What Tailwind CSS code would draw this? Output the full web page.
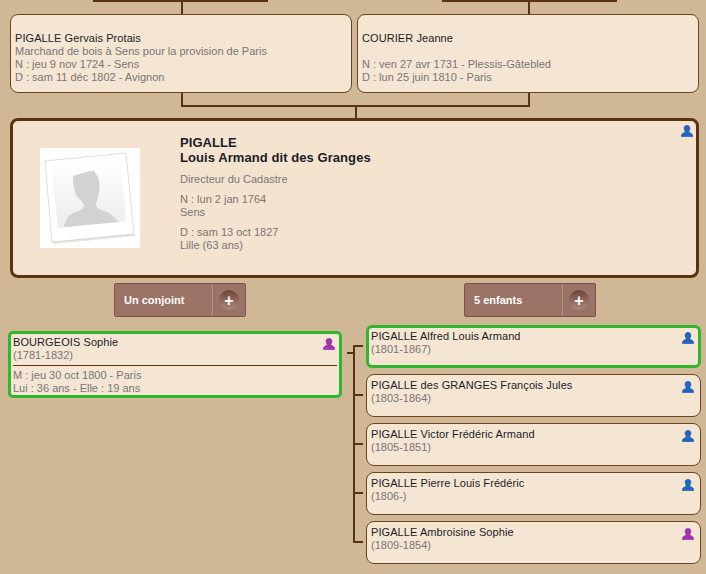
<!DOCTYPE html>
<html lang="fr">
<head>
    <meta charset="UTF-8">
    <title>PIGALLE Louis Armand</title>
    <script src="https://cdn.jsdelivr.net/npm/@tailwindcss/browser@4"></script>
</head>
<body class="w-[706px] h-[574px] overflow-hidden bg-[#d0b896] font-['Liberation_Sans',Arial,sans-serif] text-[11px] leading-[13px] text-[#7a7478]">
    <!-- Grands-parents -->
    <div class="flex pl-[10px] gap-[5px]">
        <div class="w-[342px]">
            <div class="ml-[83px] w-[175px] h-[2px] bg-[#5a3410]"></div>
            <div class="ml-[171px] w-[2px] h-[12px] bg-[#5a3410]"></div>
            <div class="h-[79px] rounded-[8px] border border-[#6b4520] bg-[#f4e6d2] px-[4px] pt-[17px]">
                <p class="text-[#1c1c28] tracking-[0.08px]">PIGALLE Gervais Protais</p>
                <p>Marchand de bois à Sens pour la provision de Paris</p>
                <p>N : jeu 9 nov 1724 - Sens</p>
                <p>D : sam 11 déc 1802 - Avignon</p>
            </div>
        </div>
        <div class="w-[342px]">
            <div class="ml-[85px] w-[175px] h-[2px] bg-[#5a3410]"></div>
            <div class="ml-[171px] w-[2px] h-[12px] bg-[#5a3410]"></div>
            <div class="h-[79px] rounded-[8px] border border-[#6b4520] bg-[#f4e6d2] px-[4px] pt-[17px]">
                <p class="text-[#1c1c28] tracking-[0.08px]">COURIER Jeanne</p>
                <p>&nbsp;</p>
                <p>N : ven 27 avr 1731 - Plessis-Gâtebled</p>
                <p>D : lun 25 juin 1810 - Paris</p>
            </div>
        </div>
    </div>

    <!-- Liaison parents -->
    <div class="ml-[181px] w-[349px] h-[14px] border-x-2 border-b-2 border-[#5a3410]"></div>
    <div class="ml-[355px] w-[2px] h-[11px] bg-[#5a3410]"></div>

    <!-- Fiche principale -->
    <div class="relative ml-[10px] w-[689px] h-[160px] rounded-[8px] border-[3px] border-[#5a3410] bg-[#f4e4cf] flex">
        <div class="ml-[27px] mt-[27px] w-[100px] h-[100px] bg-white shrink-0">
            <svg width="100" height="100" viewBox="0 0 100 100">
                <defs>
                    <linearGradient id="fond" x1="0" y1="0" x2="0" y2="1">
                        <stop offset="0" stop-color="#ffffff"/>
                        <stop offset="1" stop-color="#ececec"/>
                    </linearGradient>
                </defs>
                <polygon points="13,96 95,88 93,84 12,91" fill="#e8e4e0"/>
                <polygon points="5,13 86,5 94,86 12,94" fill="#ffffff" stroke="#bcbcbc" stroke-width="0.5"/>
                <polygon points="11,18 81,12 86,73 18,80" fill="url(#fond)"/>
                <path d="M33 28 C38 26 44 25 50 23 C50 24 53 24 53 22 C57 26 60 32 59.5 40 C59 50 56 53 56 57 C56 61 63 62 69 65 C73 68 77 73 79 74 L24 79 C25 72 28 68 33 65 C38 63 43 62 44 58 C44 54 39 52 36 47 C34 42 33 35 33 28 Z" fill="#d2d2d2"/>
            </svg>
        </div>
        <div class="ml-[40px] mt-[14px]">
            <h1 class="text-[13px] leading-[15px] font-bold text-[#1c1c28] tracking-[0.07px]">PIGALLE<br>Louis Armand dit des Granges</h1>
            <p class="mt-[8px]">Directeur du Cadastre</p>
            <p class="mt-[7px]">N : lun 2 jan 1764<br>Sens</p>
            <p class="mt-[7px]">D : sam 13 oct 1827<br>Lille (63 ans)</p>
        </div>
        <svg class="absolute top-[4px] right-[3px]" width="12" height="12" viewBox="0 0 12 12">
            <path d="M6 .4C4 .4 3.1 1.7 3.1 3.3 3.1 4.8 4 5.9 4.2 6.7 4.2 7.6 1.4 8 .7 9.5L.4 11.6H11.6L11.3 9.5C10.6 8 7.8 7.6 7.8 6.7 8 5.9 8.9 4.8 8.9 3.3 8.9 1.7 8 .4 6 .4Z" fill="#1f66c8" stroke="#144a96" stroke-width=".6"/>
        </svg>
    </div>

    <!-- Boutons -->
    <div class="flex mt-[5px] ml-[114px] gap-[218px]">
        <div class="flex w-[132px] h-[34px] rounded-[2px] border border-[#7d5246] bg-[#9a7266] text-white font-bold text-[11px]">
            <span class="flex-1 flex items-center pl-[9px] border-r border-[#b59186]">Un conjoint</span>
            <span class="w-[32px] flex items-center justify-center">
                <span class="w-[20px] h-[20px] rounded-full bg-gradient-to-b from-[#6f443a] to-[#ab897f] flex items-center justify-center text-[16px]">+</span>
            </span>
        </div>
        <div class="flex w-[132px] h-[34px] rounded-[2px] border border-[#7d5246] bg-[#9a7266] text-white font-bold text-[11px]">
            <span class="flex-1 flex items-center pl-[9px] border-r border-[#b59186]">5 enfants</span>
            <span class="w-[32px] flex items-center justify-center">
                <span class="w-[20px] h-[20px] rounded-full bg-gradient-to-b from-[#6f443a] to-[#ab897f] flex items-center justify-center text-[16px]">+</span>
            </span>
        </div>
    </div>

    <!-- Conjoint et enfants -->
    <div class="flex items-start mt-[8px] ml-[8px]">
        <div class="relative mt-[6px] w-[334px] h-[67px] rounded-[5px] border-[3px] border-[#2fb82f] bg-[#f4e6d2] px-[2px] pt-[2px]">
            <p class="text-[#1c1c28] tracking-[0.08px]">BOURGEOIS Sophie</p>
            <p>(1781-1832)</p>
            <div class="h-px bg-[#5a3410] mt-[3px] mb-[3px]"></div>
            <p>M : jeu 30 oct 1800 - Paris</p>
            <p>Lui : 36 ans - Elle : 19 ans</p>
            <svg class="absolute top-[4px] right-[4px]" width="12" height="12" viewBox="0 0 12 12">
                <path d="M6 .4C4 .4 3.1 1.7 3.1 3.3 3.1 4.8 4 5.9 4.2 6.7 4.2 7.6 1.4 8 .7 9.5L.4 11.6H11.6L11.3 9.5C10.6 8 7.8 7.6 7.8 6.7 8 5.9 8.9 4.8 8.9 3.3 8.9 1.7 8 .4 6 .4Z" fill="#a830b4" stroke="#7c2088" stroke-width=".6"/>
            </svg>
        </div>
        <div class="ml-[5px] mt-[27px] w-[6px] h-[2px] bg-[#5a3410]"></div>
        <div class="relative flex flex-col gap-[6px]">
            <div class="absolute left-0 top-[20px] w-[2px] h-[198px] bg-[#5a3410]"></div>
            <div class="flex items-start">
                <div class="ml-[2px] mr-[3px] mt-[20px] w-[8px] h-[2px] bg-[#5a3410]"></div>
                <div class="relative w-[335px] h-[43px] rounded-[6px] border-[3px] border-[#2fb82f] bg-[#f4e6d2] px-[2px] pt-[2px]">
                    <p class="text-[#1c1c28] tracking-[0.08px]">PIGALLE Alfred Louis Armand</p>
                    <p>(1801-1867)</p>
                    <svg class="absolute top-[4px] right-[4px]" width="12" height="12" viewBox="0 0 12 12">
                        <path d="M6 .4C4 .4 3.1 1.7 3.1 3.3 3.1 4.8 4 5.9 4.2 6.7 4.2 7.6 1.4 8 .7 9.5L.4 11.6H11.6L11.3 9.5C10.6 8 7.8 7.6 7.8 6.7 8 5.9 8.9 4.8 8.9 3.3 8.9 1.7 8 .4 6 .4Z" fill="#1f66c8" stroke="#144a96" stroke-width=".6"/>
                    </svg>
                </div>
            </div>
            <div class="flex items-start">
                <div class="ml-[2px] mr-[3px] mt-[20px] w-[8px] h-[2px] bg-[#5a3410]"></div>
                <div class="relative w-[335px] h-[43px] rounded-[8px] border border-[#6b4520] bg-[#f4e6d2] px-[4px] pt-[4px]">
                    <p class="text-[#1c1c28] tracking-[0.08px]">PIGALLE des GRANGES François Jules</p>
                    <p>(1803-1864)</p>
                    <svg class="absolute top-[6px] right-[6px]" width="12" height="12" viewBox="0 0 12 12">
                        <path d="M6 .4C4 .4 3.1 1.7 3.1 3.3 3.1 4.8 4 5.9 4.2 6.7 4.2 7.6 1.4 8 .7 9.5L.4 11.6H11.6L11.3 9.5C10.6 8 7.8 7.6 7.8 6.7 8 5.9 8.9 4.8 8.9 3.3 8.9 1.7 8 .4 6 .4Z" fill="#1f66c8" stroke="#144a96" stroke-width=".6"/>
                    </svg>
                </div>
            </div>
            <div class="flex items-start">
                <div class="ml-[2px] mr-[3px] mt-[20px] w-[8px] h-[2px] bg-[#5a3410]"></div>
                <div class="relative w-[335px] h-[43px] rounded-[8px] border border-[#6b4520] bg-[#f4e6d2] px-[4px] pt-[4px]">
                    <p class="text-[#1c1c28] tracking-[0.08px]">PIGALLE Victor Frédéric Armand</p>
                    <p>(1805-1851)</p>
                    <svg class="absolute top-[6px] right-[6px]" width="12" height="12" viewBox="0 0 12 12">
                        <path d="M6 .4C4 .4 3.1 1.7 3.1 3.3 3.1 4.8 4 5.9 4.2 6.7 4.2 7.6 1.4 8 .7 9.5L.4 11.6H11.6L11.3 9.5C10.6 8 7.8 7.6 7.8 6.7 8 5.9 8.9 4.8 8.9 3.3 8.9 1.7 8 .4 6 .4Z" fill="#1f66c8" stroke="#144a96" stroke-width=".6"/>
                    </svg>
                </div>
            </div>
            <div class="flex items-start">
                <div class="ml-[2px] mr-[3px] mt-[20px] w-[8px] h-[2px] bg-[#5a3410]"></div>
                <div class="relative w-[335px] h-[43px] rounded-[8px] border border-[#6b4520] bg-[#f4e6d2] px-[4px] pt-[4px]">
                    <p class="text-[#1c1c28] tracking-[0.08px]">PIGALLE Pierre Louis Frédéric</p>
                    <p>(1806-)</p>
                    <svg class="absolute top-[6px] right-[6px]" width="12" height="12" viewBox="0 0 12 12">
                        <path d="M6 .4C4 .4 3.1 1.7 3.1 3.3 3.1 4.8 4 5.9 4.2 6.7 4.2 7.6 1.4 8 .7 9.5L.4 11.6H11.6L11.3 9.5C10.6 8 7.8 7.6 7.8 6.7 8 5.9 8.9 4.8 8.9 3.3 8.9 1.7 8 .4 6 .4Z" fill="#1f66c8" stroke="#144a96" stroke-width=".6"/>
                    </svg>
                </div>
            </div>
            <div class="flex items-start">
                <div class="ml-[2px] mr-[3px] mt-[20px] w-[8px] h-[2px] bg-[#5a3410]"></div>
                <div class="relative w-[335px] h-[43px] rounded-[8px] border border-[#6b4520] bg-[#f4e6d2] px-[4px] pt-[4px]">
                    <p class="text-[#1c1c28] tracking-[0.08px]">PIGALLE Ambroisine Sophie</p>
                    <p>(1809-1854)</p>
                    <svg class="absolute top-[6px] right-[6px]" width="12" height="12" viewBox="0 0 12 12">
                        <path d="M6 .4C4 .4 3.1 1.7 3.1 3.3 3.1 4.8 4 5.9 4.2 6.7 4.2 7.6 1.4 8 .7 9.5L.4 11.6H11.6L11.3 9.5C10.6 8 7.8 7.6 7.8 6.7 8 5.9 8.9 4.8 8.9 3.3 8.9 1.7 8 .4 6 .4Z" fill="#a830b4" stroke="#7c2088" stroke-width=".6"/>
                    </svg>
                </div>
            </div>
        </div>
    </div>
</body>
</html>
